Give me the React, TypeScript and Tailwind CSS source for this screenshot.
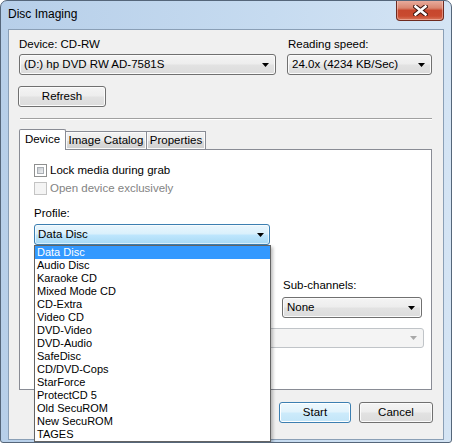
import React from "react";

const Arrow = ({ color = "#000" }: { color?: string }) => (
  <svg width="7" height="4" viewBox="0 0 7 4" className="shrink-0">
    <path d="M0 0 H7 L3.5 4 Z" fill={color} />
  </svg>
);

const Combo = ({
  text,
  className = "",
}: {
  text: string;
  className?: string;
}) => (
  <div
    className={
      "flex items-center justify-between h-[21px] rounded-[3px] border border-[#707070] bg-[linear-gradient(#f4f4f4_0%,#ededed_48%,#e2e2e2_52%,#dcdcdc_100%)] shadow-[inset_0_0_0_1px_#fbfbfb] pl-[4px] pr-[6px] " +
      className
    }
  >
    <span className="whitespace-nowrap">{text}</span>
    <Arrow />
  </div>
);

const items = [
  "Data Disc",
  "Audio Disc",
  "Karaoke CD",
  "Mixed Mode CD",
  "CD-Extra",
  "Video CD",
  "DVD-Video",
  "DVD-Audio",
  "SafeDisc",
  "CD/DVD-Cops",
  "StarForce",
  "ProtectCD 5",
  "Old SecuROM",
  "New SecuROM",
  "TAGES",
];

export default function App() {
  return (
    <div className="relative w-[452px] h-[443px] overflow-hidden rounded-t-[7px] rounded-b-[3px] border border-[#55667a] bg-[linear-gradient(90deg,#b7cfe9_0%,#c6dbf0_60%,#d4e4f4_100%)] font-['Liberation_Sans',Arial,sans-serif] text-[11.5px] leading-[15px] text-black">
      {/* title bar */}
      <div className="flex h-[28px] items-start justify-between">
        <div className="pl-[7px] pt-[6px] text-[12px] leading-[15px] text-black">
          Disc Imaging
        </div>
        <div className="-mt-[1px] mr-[7px] flex h-[21px] w-[48px] items-center justify-center rounded-b-[4px] border border-t-0 border-[#6e2a1f] bg-[linear-gradient(#eab0a2_0%,#d98670_40%,#c7472d_52%,#c94a2f_80%,#d8765a_100%)] shadow-[inset_0_0_0_1px_rgba(255,220,210,0.45)]">
          <svg width="15" height="11" viewBox="0 0 15 11">
            <path
              d="M2.5 1.5 L12.5 9.5 M12.5 1.5 L2.5 9.5"
              stroke="#3b1610"
              strokeWidth="4.6"
              strokeLinecap="square"
              fill="none"
            />
            <path
              d="M2.5 1.5 L12.5 9.5 M12.5 1.5 L2.5 9.5"
              stroke="#ffffff"
              strokeWidth="2.6"
              strokeLinecap="square"
              fill="none"
            />
          </svg>
        </div>
      </div>

      {/* client area */}
      <div className="mx-[7px] h-[411px] border border-[#8a9fb6] bg-[#f0f0f0]">
        {/* top row */}
        <div className="flex pl-[10px] pt-[7px]">
          <div className="w-[257px]">
            <div>Device: CD-RW</div>
            <Combo text="(D:) hp DVD RW AD-7581S" className="mt-[2px]" />
          </div>
          <div className="ml-[11px] w-[145px]">
            <div className="pl-[1px]">Reading speed:</div>
            <Combo text="24.0x (4234 KB/Sec)" className="mt-[2px]" />
          </div>
        </div>

        {/* refresh */}
        <div className="mt-[11px] ml-[9px] flex h-[21px] w-[88px] items-center justify-center rounded-[3px] border border-[#707070] bg-[linear-gradient(#f4f4f4_0%,#ededed_48%,#e2e2e2_52%,#dcdcdc_100%)] shadow-[inset_0_0_0_1px_#fbfbfb]">
          Refresh
        </div>

        {/* separator */}
        <div className="mt-[11px] ml-[11px] w-[412px] border-t border-b border-t-[#a0a0a0] border-b-white" />

        {/* tabs */}
        <div className="mt-[9px] ml-[10px] flex h-[20px] items-end">
          <div className="relative z-10 -mb-[1px] flex h-[21px] w-[47px] items-start justify-center border border-b-0 border-[#898c95] bg-white pt-[2px] rounded-t-[2px]">
            Device
          </div>
          <div className="flex h-[18px] w-[81px] items-center justify-center border border-b-0 border-l-0 border-[#898c95] bg-[linear-gradient(#f3f3f3_0%,#ebebeb_50%,#dddddd_51%,#cfcfcf_100%)] shadow-[inset_0_0_0_1px_#fafafa]">
            Image Catalog
          </div>
          <div className="flex h-[18px] w-[59px] items-center justify-center border border-b-0 border-l-0 border-[#898c95] bg-[linear-gradient(#f3f3f3_0%,#ebebeb_50%,#dddddd_51%,#cfcfcf_100%)] shadow-[inset_0_0_0_1px_#fafafa]">
            Properties
          </div>
        </div>

        {/* tab panel */}
        <div className="ml-[10px] h-[241px] w-[413px] border border-[#898c95] bg-white">
          <div className="pl-[14px] pt-[11px]">
            <div className="flex h-[18px] items-center">
              <div className="h-[13px] w-[13px] border border-[#8e8f8f] bg-white p-[2px]">
                <div className="h-full w-full bg-[linear-gradient(135deg,#c6cacf_0%,#eef0f2_100%)] border border-[#a9aeb4]" />
              </div>
              <span className="ml-[3px]">Lock media during grab</span>
            </div>
            <div className="flex h-[18px] items-center">
              <div className="h-[13px] w-[13px] border border-[#c4c4c4] bg-[#f4f4f4]" />
              <span className="ml-[3px] text-[#838383]">Open device exclusively</span>
            </div>
            <div className="mt-[9px]">Profile:</div>
            <div className="mt-[3px] flex h-[21px] w-[236px] items-center justify-between rounded-[3px] border border-[#3c7fb1] bg-[linear-gradient(#eaf6fd_0%,#d9f0fc_48%,#bee6fd_52%,#a7d9f5_100%)] shadow-[inset_0_0_0_1px_rgba(255,255,255,0.6)] pl-[3px] pr-[5px]">
              <span>Data Disc</span>
              <Arrow />
            </div>
          </div>

          <div className="mt-[33px] ml-[262px] w-[140px]">
            <div className="pl-[1px]">Sub-channels:</div>
            <Combo text="None" className="mt-[4px]" />
          </div>
          <div className="mt-[10px] ml-[14px] flex h-[20px] w-[390px] items-center justify-end rounded-[3px] border border-[#c0c4c8] bg-[#f4f4f4] pr-[6px]">
            <Arrow color="#a8a8a8" />
          </div>
        </div>

        {/* bottom buttons */}
        <div className="mt-[12px] flex justify-end gap-[8px] pr-[10px]">
          <div className="flex h-[21px] w-[72px] items-center justify-center rounded-[3px] border border-[#3c7fb1] bg-[linear-gradient(#eef8fd_0%,#e1f3fc_48%,#cdebfb_52%,#c2e5f8_100%)] shadow-[inset_0_0_0_1px_#ffffff]">
            Start
          </div>
          <div className="flex h-[21px] w-[74px] items-center justify-center rounded-[3px] border border-[#707070] bg-[linear-gradient(#f4f4f4_0%,#ededed_48%,#e2e2e2_52%,#dcdcdc_100%)] shadow-[inset_0_0_0_1px_#fbfbfb]">
            Cancel
          </div>
        </div>
      </div>

      {/* dropdown list */}
      <div className="absolute left-[33px] top-[244px] w-[237px] border border-[#646464] bg-white shadow-[2px_2px_3px_rgba(0,0,0,0.25)]">
        {items.map((it, i) => (
          <div
            key={it}
            className={
              "h-[13px] whitespace-nowrap pl-[2px] text-[11px] leading-[13px] " +
              (i === 0 ? "bg-[#3399ff] text-white" : "text-black")
            }
          >
            {it}
          </div>
        ))}
      </div>
    </div>
  );
}
